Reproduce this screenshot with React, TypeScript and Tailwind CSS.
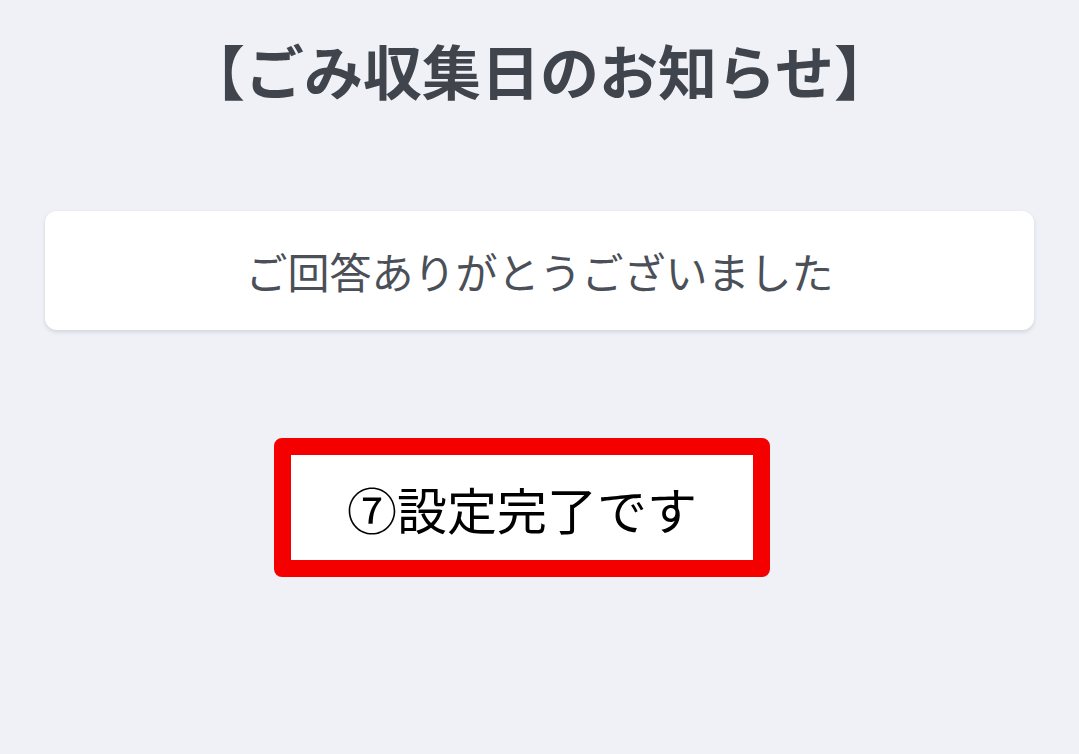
export default function App() {
    return (
        <div
            className="flex h-[754px] w-full flex-col items-center bg-[#eff1f6]"
            style={{ fontFamily: '"Noto Sans CJK JP", "Noto Sans", sans-serif' }}
        >
            <h1 className="mt-[26px] text-[59px] font-bold leading-[88px] text-[#40444c]">【ごみ収集日のお知らせ】</h1>

            <div className="mt-[97px] flex h-[119px] w-[989px] items-center justify-center rounded-xl bg-white shadow-[0_2px_4px_rgba(0,0,0,0.12)]">
                <p className="text-[42px] leading-none text-[#4b4f57]">ご回答ありがとうございました</p>
            </div>

            <div className="mt-[108px] ml-[274px] flex h-[139px] w-[496px] items-center justify-center self-start rounded-lg border-[17px] border-[#f50000] bg-white">
                <p className="text-[50px] leading-none text-black">⑦設定完了です</p>
            </div>
        </div>
    );
}
